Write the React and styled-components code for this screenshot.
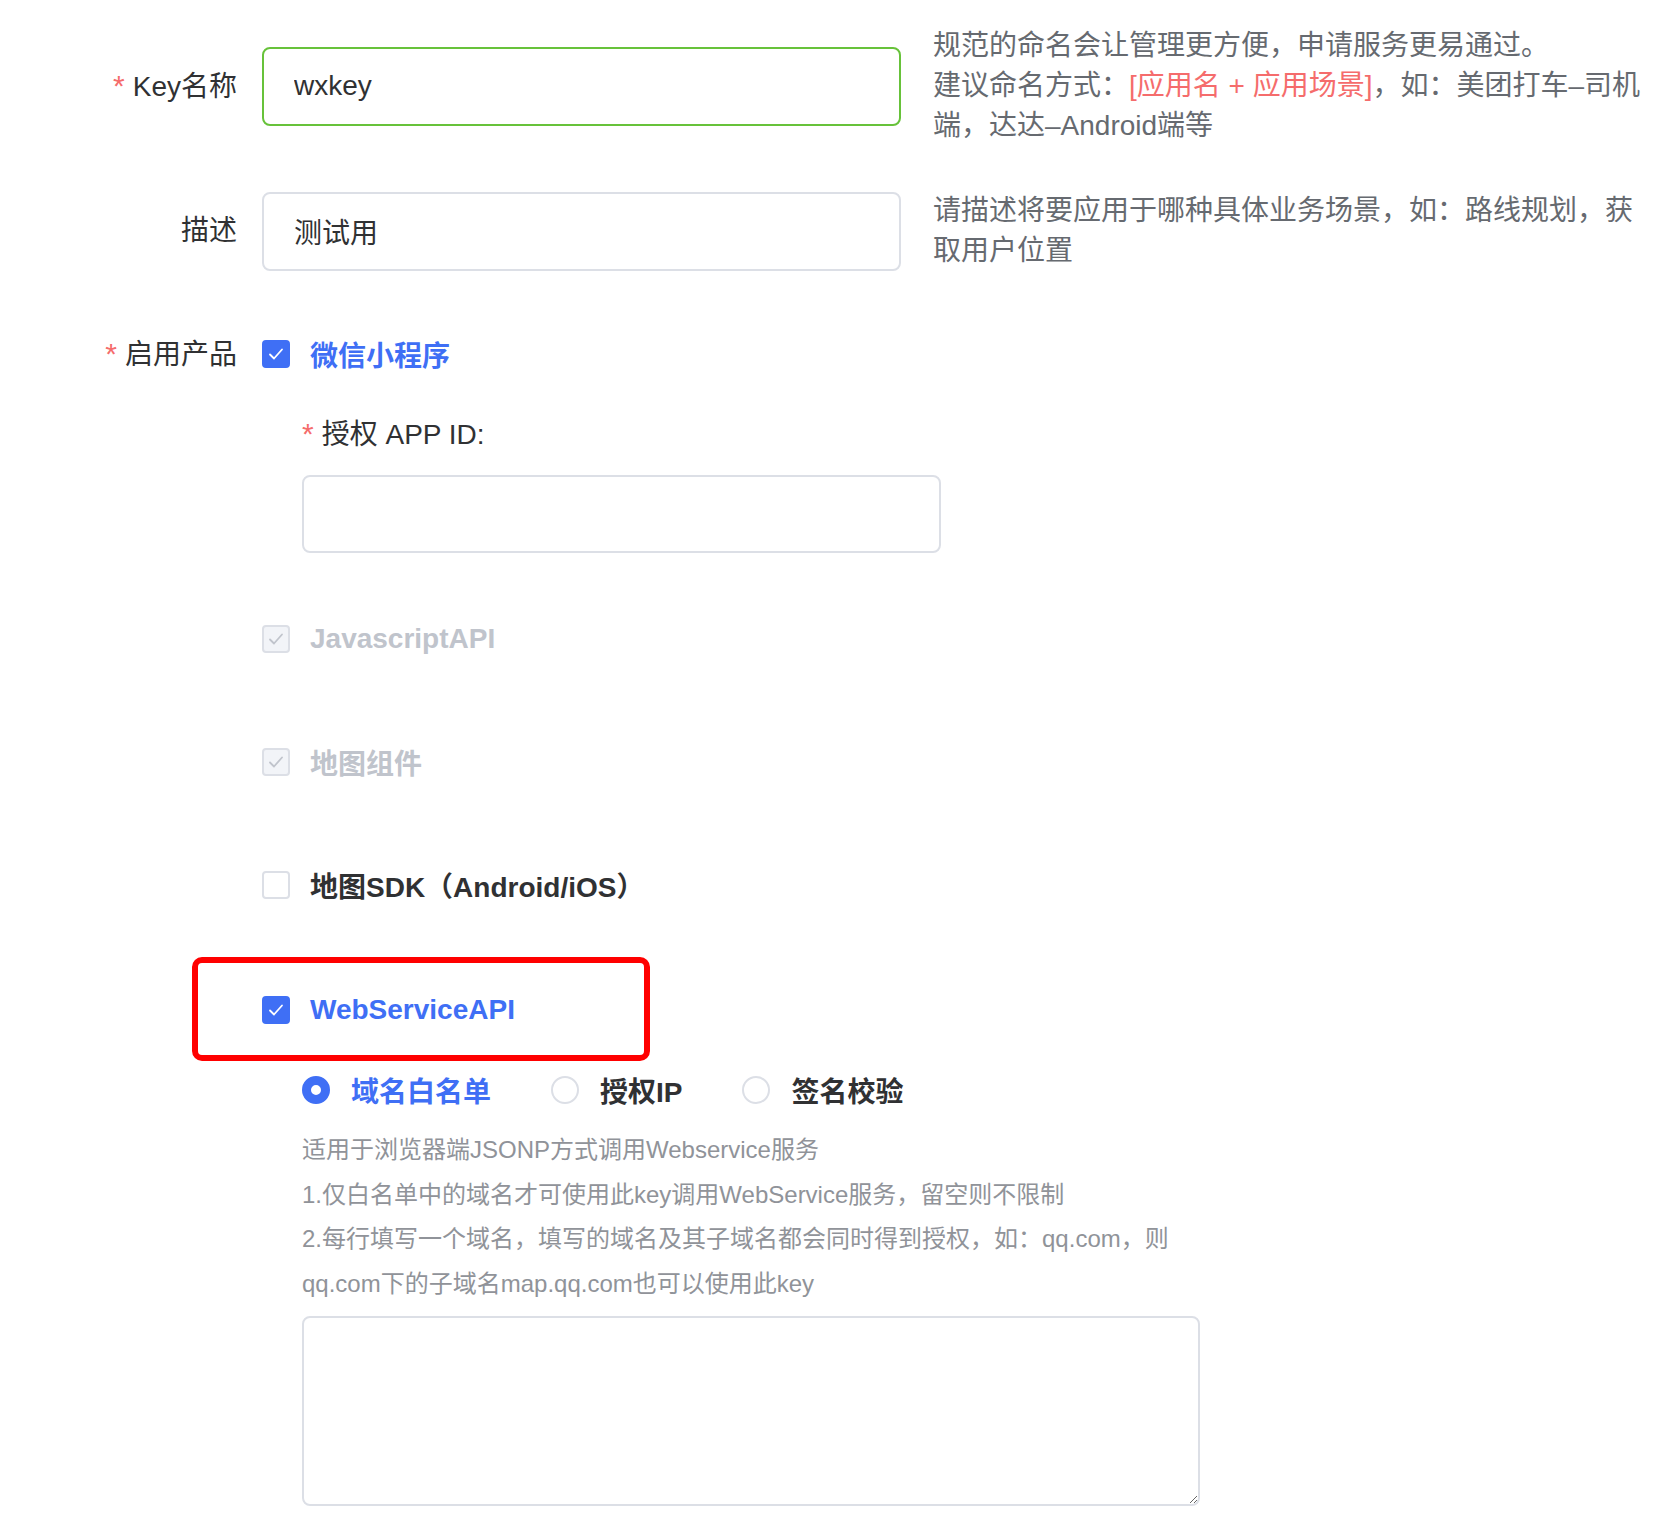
import React from 'react';
import styled, { createGlobalStyle } from 'styled-components';

const GlobalStyle = createGlobalStyle`
  body {
    margin: 0;
    background: #fff;
    font-family: "Liberation Sans", "Noto Sans CJK SC", sans-serif;
    color: #303133;
    overflow-x: hidden;
  }
`;

const BLUE = '#3f6ff5';

const Page = styled.div`
  width: 1658px;
  padding-top: 26px;
  padding-bottom: 30px;
`;

const FormItem = styled.div`
  display: flex;
  align-items: ${(p) => p.$align || 'center'};
  margin-top: ${(p) => p.$mt || 0}px;
`;

const Label = styled.div`
  flex: 0 0 262px;
  box-sizing: border-box;
  padding-right: 25px;
  text-align: right;
  font-size: 28px;
  line-height: 40px;
  color: #303133;
`;

const Star = styled.span`
  color: #f56c6c;
  margin-right: 8px;
  font-size: 30px;
`;

const Input = styled.input`
  box-sizing: border-box;
  width: 639px;
  height: 79px;
  padding: 0 30px;
  border: 2px solid ${(p) => (p.$focused ? '#67c23a' : '#dcdfe6')};
  border-radius: 8px;
  font-family: inherit;
  font-size: 28px;
  color: #303133;
  outline: none;
  background: #fff;
  flex: none;
`;

const Hint = styled.div`
  flex: 1;
  margin-left: 32px;
  font-size: 28px;
  line-height: 40px;
  color: #666a70;
  white-space: nowrap;
`;

const Red = styled.span`
  color: #f56c6c;
`;

const Products = styled.div`
  display: flex;
  flex-direction: column;
`;

const Product = styled.label`
  position: relative;
  display: flex;
  align-items: center;
  height: 40px;
  margin-top: ${(p) => p.$mt || 0}px;
  font-size: 28px;
  font-weight: 600;
  color: ${(p) => (p.$disabled ? '#c0c4cc' : p.$checked ? BLUE : '#303133')};
`;

const Box = styled.span`
  box-sizing: border-box;
  width: 28px;
  height: 28px;
  margin-right: 20px;
  border-radius: 4px;
  display: flex;
  align-items: center;
  justify-content: center;
  border: 2px solid
    ${(p) => (p.$checked && !p.$disabled ? BLUE : '#dcdfe6')};
  background: ${(p) =>
    p.$disabled ? '#f2f4f8' : p.$checked ? BLUE : '#fff'};
`;

const Highlight = styled.div`
  position: absolute;
  left: -70px;
  top: -33px;
  width: 458px;
  height: 104px;
  box-sizing: border-box;
  border: 6px solid #ff0000;
  border-radius: 10px;
  pointer-events: none;
`;

const SubBlock = styled.div`
  padding-left: 40px;
  margin-top: ${(p) => p.$mt || 0}px;
  display: flex;
  flex-direction: column;
`;

const SubLabel = styled.div`
  font-size: 28px;
  line-height: 40px;
  color: #303133;
`;

const SubInput = styled(Input)`
  margin-top: 20px;
  height: 78px;
`;

const RadioGroup = styled.div`
  display: flex;
  align-items: center;
  height: 40px;
`;

const RadioItem = styled.label`
  display: flex;
  align-items: center;
  margin-right: 60px;
  font-size: 28px;
  font-weight: 600;
  color: ${(p) => (p.$checked ? BLUE : '#303133')};
`;

const RadioDot = styled.span`
  box-sizing: border-box;
  width: 28px;
  height: 28px;
  margin-right: 21px;
  border-radius: 50%;
  background: #fff;
  border: ${(p) => (p.$checked ? `9px solid ${BLUE}` : '2px solid #dcdfe6')};
`;

const Help = styled.div`
  margin-top: 18px;
  font-size: 24px;
  line-height: 44.5px;
  color: #909399;
  white-space: nowrap;
`;

const TextArea = styled.textarea`
  box-sizing: border-box;
  display: block;
  margin-top: 10px;
  width: 898px;
  height: 190px;
  border: 2px solid #dcdfe6;
  border-radius: 8px;
  outline: none;
  font-family: inherit;
  font-size: 24px;
`;

const Check = ({ color }) => (
  <svg width="20" height="20" viewBox="0 0 20 20">
    <path
      d="M4 10.5 L8 14.5 L16 5.5"
      fill="none"
      stroke={color}
      strokeWidth="1.8"
      strokeLinecap="round"
      strokeLinejoin="round"
    />
  </svg>
);

const CheckItem = ({ checked, disabled, mt, children, highlight }) => (
  <Product $checked={checked} $disabled={disabled} $mt={mt}>
    <Box $checked={checked} $disabled={disabled}>
      {checked && <Check color={disabled ? '#c0c4cc' : '#fff'} />}
    </Box>
    {children}
    {highlight && <Highlight />}
  </Product>
);

const radios = ['域名白名单', '授权IP', '签名校验'];

const App = () => (
  <Page>
    <GlobalStyle />
    <FormItem>
      <Label>
        <Star>*</Star>Key名称
      </Label>
      <Input $focused defaultValue="wxkey" />
      <Hint>
        <div>规范的命名会让管理更方便，申请服务更易通过。</div>
        <div>
          建议命名方式：<Red>[应用名 + 应用场景]</Red>，如：美团打车–司机
        </div>
        <div>端，达达–Android端等</div>
      </Hint>
    </FormItem>

    <FormItem $mt={45}>
      <Label>描述</Label>
      <Input defaultValue="测试用" />
      <Hint>
        <div>请描述将要应用于哪种具体业务场景，如：路线规划，获</div>
        <div>取用户位置</div>
      </Hint>
    </FormItem>

    <FormItem $mt={63} $align="flex-start">
      <Label>
        <Star>*</Star>启用产品
      </Label>
      <Products>
        <CheckItem checked>微信小程序</CheckItem>
        <SubBlock $mt={40}>
          <SubLabel>
            <Star>*</Star>授权 APP ID:
          </SubLabel>
          <SubInput />
        </SubBlock>
        <CheckItem checked disabled mt={66}>
          JavascriptAPI
        </CheckItem>
        <CheckItem checked disabled mt={83}>
          地图组件
        </CheckItem>
        <CheckItem mt={83}>地图SDK（Android/iOS）</CheckItem>
        <CheckItem checked mt={85} highlight>
          WebServiceAPI
        </CheckItem>
        <SubBlock $mt={40}>
          <RadioGroup>
            {radios.map((r, i) => (
              <RadioItem key={r} $checked={i === 0}>
                <RadioDot $checked={i === 0} />
                {r}
              </RadioItem>
            ))}
          </RadioGroup>
          <Help>
            <div>适用于浏览器端JSONP方式调用Webservice服务</div>
            <div>1.仅白名单中的域名才可使用此key调用WebService服务，留空则不限制</div>
            <div>2.每行填写一个域名，填写的域名及其子域名都会同时得到授权，如：qq.com，则</div>
            <div>qq.com下的子域名map.qq.com也可以使用此key</div>
          </Help>
          <TextArea />
        </SubBlock>
      </Products>
    </FormItem>
  </Page>
);

export default App;
